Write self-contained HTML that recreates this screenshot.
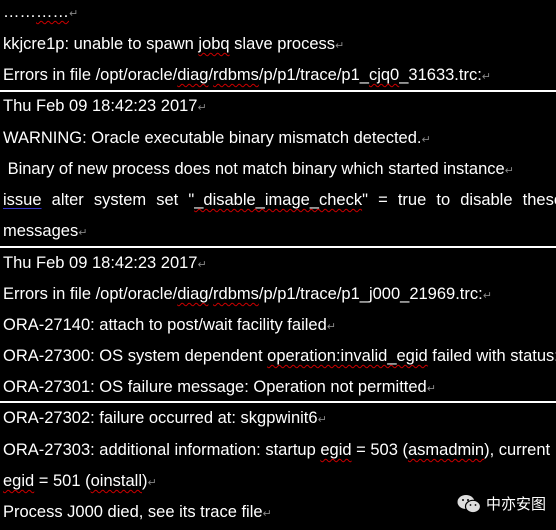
<!DOCTYPE html>
<html><head><meta charset="utf-8"><style>
html,body{margin:0;padding:0;background:#000;width:556px;height:530px;overflow:hidden}
body{position:relative;font-family:"Liberation Sans","DejaVu Sans",sans-serif;font-size:16.5px;color:#fff}
.l{position:absolute;left:3px;height:31px;line-height:31px;white-space:nowrap}
.r{position:absolute;left:0;width:556px;height:2px;background:#fff}
.u{text-decoration:underline wavy #c00;text-decoration-thickness:1px;text-underline-offset:3px}
.b{text-decoration:underline #33c;text-underline-offset:3px}
.m{color:#888;font-size:11px}
.j{width:560px;text-align:justify;text-align-last:justify}
</style></head><body>
<div class="l" style="top:-3px">……<span class="u">……</span><span class="m">↵</span></div>
<div class="l" style="top:29px">kkjcre1p: unable to spawn <span class="u">jobq</span> slave process<span class="m">↵</span></div>
<div class="l" style="top:60px">Errors in file /opt/oracle/<span class="u">diag</span>/<span class="u">rdbms</span>/p/p1/trace/p1_<span class="u">cjq0</span>_31633.trc:<span class="m">↵</span></div>
<div class="r" style="top:90px"></div>
<div class="l" style="top:91px">Thu Feb 09 18:42:23 2017<span class="m">↵</span></div>
<div class="l" style="top:123px">WARNING: Oracle executable binary mismatch detected.<span class="m">↵</span></div>
<div class="l" style="top:154px">&nbsp;Binary of new process does not match binary which started instance<span class="m">↵</span></div>
<div class="l j" style="top:185px"><span class="b">issue</span> alter system set "<span class="u">_disable_image_check</span>" = true to disable these</div>
<div class="l" style="top:216px">messages<span class="m">↵</span></div>
<div class="r" style="top:246px"></div>
<div class="l" style="top:248px">Thu Feb 09 18:42:23 2017<span class="m">↵</span></div>
<div class="l" style="top:279px">Errors in file /opt/oracle/<span class="u">diag</span>/<span class="u">rdbms</span>/p/p1/trace/p1_j000_21969.trc:<span class="m">↵</span></div>
<div class="l" style="top:310px">ORA-27140: attach to post/wait facility failed<span class="m">↵</span></div>
<div class="l" style="top:341px">ORA-27300: OS system dependent <span class="u">operation:invalid_egid</span> failed with status: 1</div>
<div class="l" style="top:372px">ORA-27301: OS failure message: Operation not permitted<span class="m">↵</span></div>
<div class="r" style="top:401px"></div>
<div class="l" style="top:403px">ORA-27302: failure occurred at: skgpwinit6<span class="m">↵</span></div>
<div class="l" style="top:435px">ORA-27303: additional information: startup <span class="u">egid</span> = 503 (<span class="u">asmadmin</span>), current</div>
<div class="l" style="top:466px"><span class="u">egid</span> = 501 (<span class="u">oinstall</span>)<span class="m">↵</span></div>
<div class="l" style="top:497px">Process J000 died, see its trace file<span class="m">↵</span></div>
<div style="position:absolute;left:455px;top:492px;width:101px;height:24px;background:#000"></div>
<svg style="position:absolute;left:457px;top:494px" width="24" height="20" viewBox="0 0 24 20">
<ellipse cx="9" cy="8" rx="8.5" ry="7" fill="#ddd"/>
<ellipse cx="16" cy="12.5" rx="7.5" ry="6.2" fill="#ddd" stroke="#000" stroke-width="1.2"/>
<circle cx="6" cy="6" r="1" fill="#000"/><circle cx="11" cy="6" r="1" fill="#000"/>
<circle cx="13.5" cy="11" r="0.9" fill="#000"/><circle cx="18.5" cy="11" r="0.9" fill="#000"/>
</svg>
<div style="position:absolute;left:486px;top:494px;font-family:'Noto Sans CJK SC',sans-serif;font-size:15px;color:#fff;line-height:20px">中亦安图</div>
</body></html>
